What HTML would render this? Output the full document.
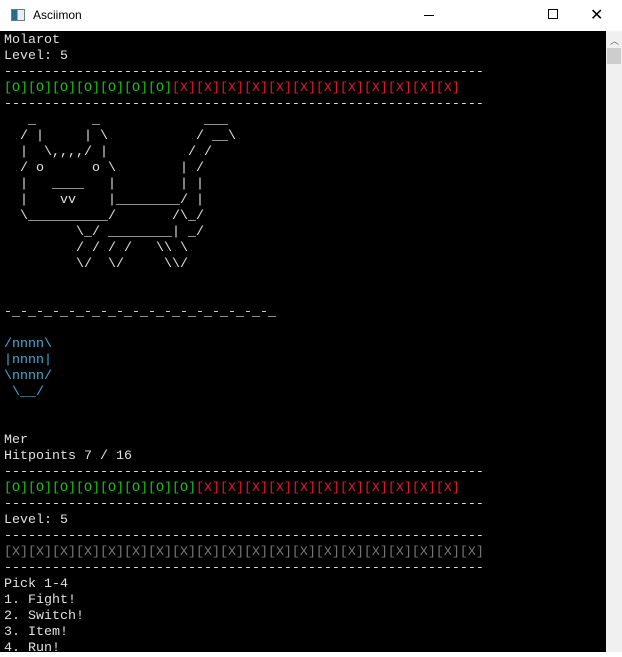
<!DOCTYPE html>
<html><head><meta charset="utf-8"><style>
html,body{margin:0;padding:0;width:622px;height:652px;overflow:hidden;background:#fff;}
#title{position:absolute;left:0;top:0;width:622px;height:31px;background:#fff;font-family:"Liberation Sans",sans-serif;font-size:12px;color:#000;}
#title .ico{position:absolute;left:11px;top:9px;width:14px;height:12px;border:1px solid #6a7a8a;background:linear-gradient(90deg,#2a6a8a 0 45%,#e8eef4 45%);box-sizing:border-box;}
#title .t{position:absolute;left:33px;top:8px;}
#title .min{position:absolute;left:424px;top:15px;width:10px;height:1px;background:#000;}
#title .max{position:absolute;left:548px;top:9px;width:10px;height:10px;border:1px solid #000;box-sizing:border-box;}
#title .x{position:absolute;left:590px;top:5px;font-size:16px;}
#con{position:absolute;left:0px;top:31px;width:606px;height:621px;background:#000;}
#sb{position:absolute;left:606px;top:31px;width:16px;height:621px;background:#f0f0f0;}
#sb .th{position:absolute;left:1px;top:17px;width:14px;height:16px;background:#cdcdcd;}
#sb .up{position:absolute;left:4px;top:3px;font-size:9px;color:#606060;font-family:"DejaVu Sans",sans-serif;}
pre{position:absolute;left:4px;top:33px;margin:0;font-family:"Liberation Mono",monospace;font-size:13.33px;line-height:16px;color:#e0e0e0;white-space:pre;}
.g{color:#16c60c}.r{color:#e81818}.c{color:#3ab0dc}.d{color:#767676}
</style></head><body>
<div id="title"><div class="ico"></div><span class="t">Asciimon</span><div class="min"></div><div class="max"></div><span class="x">✕</span></div>
<div id="con"></div>
<div id="sb"><span class="up">︿</span><div class="th"></div></div>
<pre>Molarot
Level: 5
------------------------------------------------------------
<span class="g">[O][O][O][O][O][O][O]</span><span class="r">[X][X][X][X][X][X][X][X][X][X][X][X]</span>
------------------------------------------------------------
   _       _             ___
  / |     | \           / __\
  |  \,,,,/ |          / /
  / o      o \        | /
  |   ____   |        | |
  |    vv    |________/ |
  \__________/       /\_/
         \_/ ________| _/
         / / / /   \\ \
         \/  \/     \\/


-_-_-_-_-_-_-_-_-_-_-_-_-_-_-_-_-_

<span class="c">/nnnn\
|nnnn|
\nnnn/
 \__/</span>


Mer
Hitpoints 7 / 16
------------------------------------------------------------
<span class="g">[O][O][O][O][O][O][O][O]</span><span class="r">[X][X][X][X][X][X][X][X][X][X][X]</span>
------------------------------------------------------------
Level: 5
------------------------------------------------------------
<span class="d">[X][X][X][X][X][X][X][X][X][X][X][X][X][X][X][X][X][X][X][X]</span>
------------------------------------------------------------
Pick 1-4
1. Fight!
2. Switch!
3. Item!
4. Run!</pre>
</body></html>
